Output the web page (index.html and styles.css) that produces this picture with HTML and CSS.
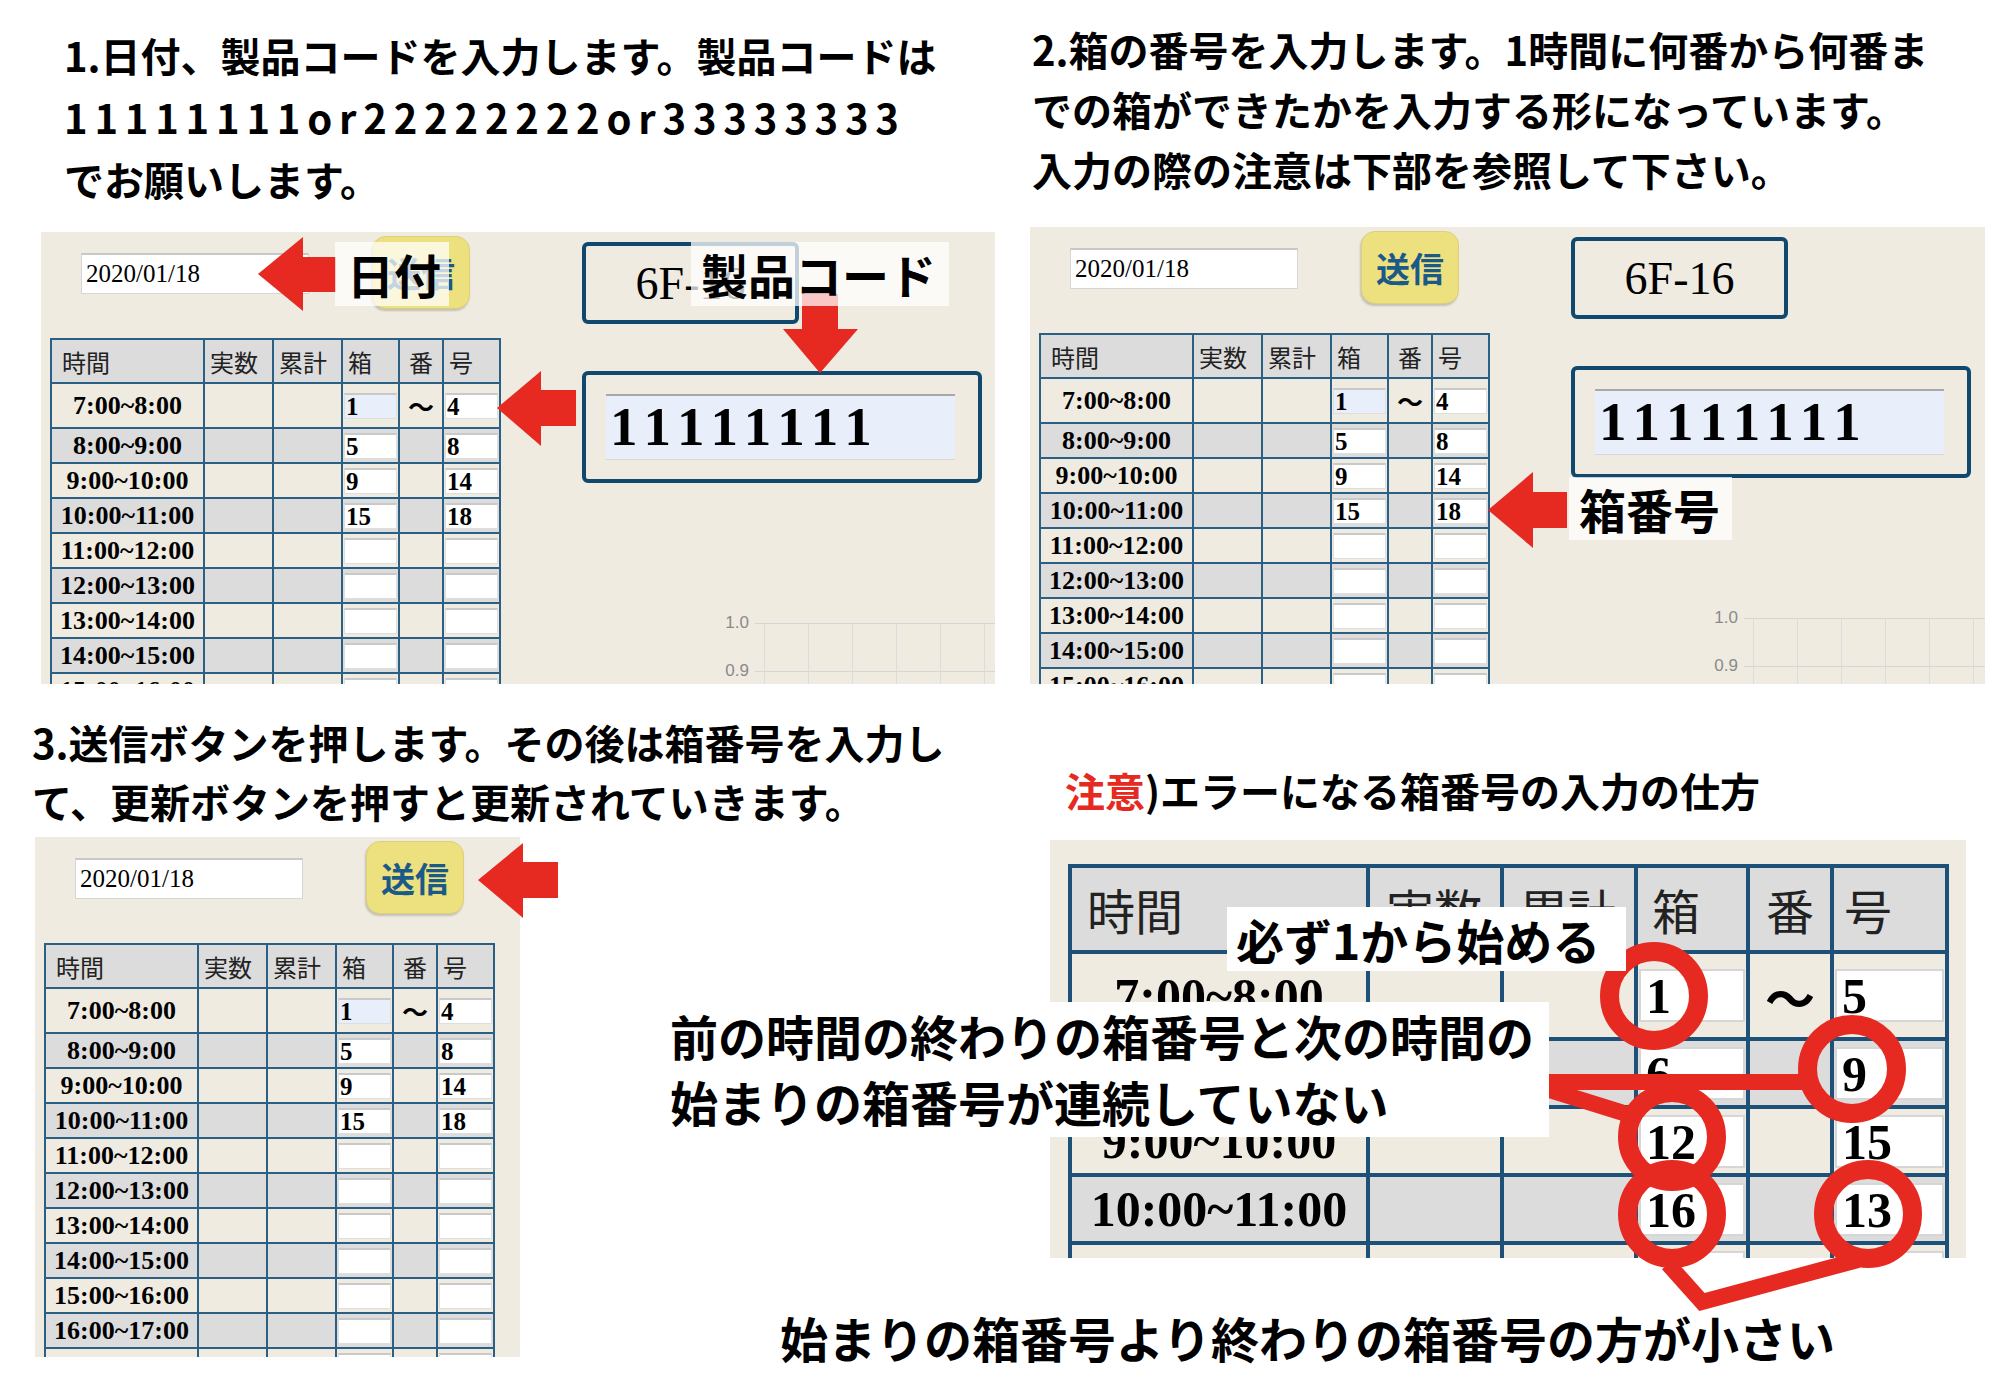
FILE: index.html
```html
<!DOCTYPE html>
<html lang="ja">
<head>
<meta charset="utf-8">
<link rel="stylesheet" href="styles.css">
</head>
<body>
<div class="page">
  <!-- top left -->
  <section class="cell">
    <p class="title t1">1.日付、製品コードを入力します。製品コードは<br><span class="digits">11111111or22222222or33333333</span><br>でお願いします。</p>
    <div class="shot s1">
      <div class="shot-left">
        <div class="ctrl"><div class="date">2020/01/18</div><div class="send">送信</div></div>
        <table class="tt">
          <colgroup><col class="c1"><col class="c2"><col class="c3"><col class="c4"><col class="c5"><col class="c6"></colgroup>
          <tr class="hd"><th class="pl">時間</th><th>実数</th><th>累計</th><th>箱</th><th class="ct">番</th><th>号</th></tr>
          <tr class="r1"><td class="tm">7:00~8:00</td><td></td><td></td><td class="in"><div class="box focus">1</div></td><td class="wave">〜</td><td class="in"><div class="box">4</div></td></tr>
          <tr class="g"><td class="tm">8:00~9:00</td><td></td><td></td><td class="in"><div class="box">5</div></td><td></td><td class="in"><div class="box">8</div></td></tr>
          <tr><td class="tm">9:00~10:00</td><td></td><td></td><td class="in"><div class="box">9</div></td><td></td><td class="in"><div class="box">14</div></td></tr>
          <tr class="g"><td class="tm">10:00~11:00</td><td></td><td></td><td class="in"><div class="box">15</div></td><td></td><td class="in"><div class="box">18</div></td></tr>
          <tr><td class="tm">11:00~12:00</td><td></td><td></td><td class="in"><div class="box"></div></td><td></td><td class="in"><div class="box"></div></td></tr>
          <tr class="g"><td class="tm">12:00~13:00</td><td></td><td></td><td class="in"><div class="box"></div></td><td></td><td class="in"><div class="box"></div></td></tr>
          <tr><td class="tm">13:00~14:00</td><td></td><td></td><td class="in"><div class="box"></div></td><td></td><td class="in"><div class="box"></div></td></tr>
          <tr class="g"><td class="tm">14:00~15:00</td><td></td><td></td><td class="in"><div class="box"></div></td><td></td><td class="in"><div class="box"></div></td></tr>
          <tr><td class="tm">15:00~16:00</td><td></td><td></td><td class="in"><div class="box"></div></td><td></td><td class="in"><div class="box"></div></td></tr>
        </table>
      </div>
      <div class="shot-right">
        <div class="line-box">6F-16</div>
        <div class="code-box"><div class="code-in">11111111</div></div>
        <div class="chart"><div class="axis"><span>1.0</span><span>0.9</span></div><div class="grid"></div></div>
      </div>
    </div>
  </section>

  <!-- top right -->
  <section class="cell">
    <p class="title t2">2.箱の番号を入力します。1時間に何番から何番ま<br>での箱ができたかを入力する形になっています。<br>入力の際の注意は下部を参照して下さい。</p>
    <div class="shot s2">
      <div class="shot-left">
        <div class="ctrl"><div class="date">2020/01/18</div><div class="send">送信</div></div>
        <table class="tt">
          <colgroup><col class="c1"><col class="c2"><col class="c3"><col class="c4"><col class="c5"><col class="c6"></colgroup>
          <tr class="hd"><th class="pl">時間</th><th>実数</th><th>累計</th><th>箱</th><th class="ct">番</th><th>号</th></tr>
          <tr class="r1"><td class="tm">7:00~8:00</td><td></td><td></td><td class="in"><div class="box focus">1</div></td><td class="wave">〜</td><td class="in"><div class="box">4</div></td></tr>
          <tr class="g"><td class="tm">8:00~9:00</td><td></td><td></td><td class="in"><div class="box">5</div></td><td></td><td class="in"><div class="box">8</div></td></tr>
          <tr><td class="tm">9:00~10:00</td><td></td><td></td><td class="in"><div class="box">9</div></td><td></td><td class="in"><div class="box">14</div></td></tr>
          <tr class="g"><td class="tm">10:00~11:00</td><td></td><td></td><td class="in"><div class="box">15</div></td><td></td><td class="in"><div class="box">18</div></td></tr>
          <tr><td class="tm">11:00~12:00</td><td></td><td></td><td class="in"><div class="box"></div></td><td></td><td class="in"><div class="box"></div></td></tr>
          <tr class="g"><td class="tm">12:00~13:00</td><td></td><td></td><td class="in"><div class="box"></div></td><td></td><td class="in"><div class="box"></div></td></tr>
          <tr><td class="tm">13:00~14:00</td><td></td><td></td><td class="in"><div class="box"></div></td><td></td><td class="in"><div class="box"></div></td></tr>
          <tr class="g"><td class="tm">14:00~15:00</td><td></td><td></td><td class="in"><div class="box"></div></td><td></td><td class="in"><div class="box"></div></td></tr>
          <tr><td class="tm">15:00~16:00</td><td></td><td></td><td class="in"><div class="box"></div></td><td></td><td class="in"><div class="box"></div></td></tr>
        </table>
      </div>
      <div class="shot-right">
        <div class="line-box">6F-16</div>
        <div class="code-box"><div class="code-in">11111111</div></div>
        <div class="chart"><div class="axis"><span>1.0</span><span>0.9</span></div><div class="grid"></div></div>
      </div>
    </div>
  </section>

  <!-- bottom left -->
  <section class="cell">
    <p class="title t3">3.送信ボタンを押します。その後は箱番号を入力し<br>て、更新ボタンを押すと更新されていきます。</p>
    <div class="shot s3">
      <div class="shot-left">
        <div class="ctrl"><div class="date">2020/01/18</div><div class="send">送信</div></div>
        <table class="tt">
          <colgroup><col class="c1"><col class="c2"><col class="c3"><col class="c4"><col class="c5"><col class="c6"></colgroup>
          <tr class="hd"><th class="pl">時間</th><th>実数</th><th>累計</th><th>箱</th><th class="ct">番</th><th>号</th></tr>
          <tr class="r1"><td class="tm">7:00~8:00</td><td></td><td></td><td class="in"><div class="box focus">1</div></td><td class="wave">〜</td><td class="in"><div class="box">4</div></td></tr>
          <tr class="g"><td class="tm">8:00~9:00</td><td></td><td></td><td class="in"><div class="box">5</div></td><td></td><td class="in"><div class="box">8</div></td></tr>
          <tr><td class="tm">9:00~10:00</td><td></td><td></td><td class="in"><div class="box">9</div></td><td></td><td class="in"><div class="box">14</div></td></tr>
          <tr class="g"><td class="tm">10:00~11:00</td><td></td><td></td><td class="in"><div class="box">15</div></td><td></td><td class="in"><div class="box">18</div></td></tr>
          <tr><td class="tm">11:00~12:00</td><td></td><td></td><td class="in"><div class="box"></div></td><td></td><td class="in"><div class="box"></div></td></tr>
          <tr class="g"><td class="tm">12:00~13:00</td><td></td><td></td><td class="in"><div class="box"></div></td><td></td><td class="in"><div class="box"></div></td></tr>
          <tr><td class="tm">13:00~14:00</td><td></td><td></td><td class="in"><div class="box"></div></td><td></td><td class="in"><div class="box"></div></td></tr>
          <tr class="g"><td class="tm">14:00~15:00</td><td></td><td></td><td class="in"><div class="box"></div></td><td></td><td class="in"><div class="box"></div></td></tr>
          <tr><td class="tm">15:00~16:00</td><td></td><td></td><td class="in"><div class="box"></div></td><td></td><td class="in"><div class="box"></div></td></tr>
          <tr class="g"><td class="tm">16:00~17:00</td><td></td><td></td><td class="in"><div class="box"></div></td><td></td><td class="in"><div class="box"></div></td></tr>
          <tr><td class="tm">17:00~18:00</td><td></td><td></td><td class="in"><div class="box"></div></td><td></td><td class="in"><div class="box"></div></td></tr>
        </table>
      </div>
    </div>
  </section>

  <!-- bottom right -->
  <section class="cell">
    <p class="title t4"><span class="red">注意</span>)エラーになる箱番号の入力の仕方</p>
    <div class="zoomshot">
      <table class="big">
        <colgroup><col class="b1"><col class="b2"><col class="b3"><col class="b4"><col class="b5"><col class="b6"></colgroup>
        <tr class="hd"><th class="p1">時間</th><th class="p2">実数</th><th class="p2">累計</th><th class="p3">箱</th><th class="ct">番</th><th class="p4">号</th></tr>
        <tr class="r1"><td class="tm">7:00~8:00</td><td></td><td></td><td class="in"><div class="box">1</div></td><td class="wave">〜</td><td class="in"><div class="box">5</div></td></tr>
        <tr class="g"><td class="tm">8:00~9:00</td><td></td><td></td><td class="in"><div class="box">6</div></td><td></td><td class="in"><div class="box">9</div></td></tr>
        <tr><td class="tm">9:00~10:00</td><td></td><td></td><td class="in"><div class="box">12</div></td><td></td><td class="in"><div class="box">15</div></td></tr>
        <tr class="g"><td class="tm">10:00~11:00</td><td></td><td></td><td class="in"><div class="box">16</div></td><td></td><td class="in"><div class="box">13</div></td></tr>
        <tr><td class="tm">11:00~12:00</td><td></td><td></td><td class="in"><div class="box"></div></td><td></td><td class="in"><div class="box"></div></td></tr>
      </table>
    </div>
  </section>

  <!-- annotations -->
  <svg class="marks" width="2012" height="1378" viewBox="0 0 2012 1378" xmlns="http://www.w3.org/2000/svg">
    <g fill="#e62a22">
      <polygon points="258,274 303,237 303,257 336,257 336,292 303,292 303,311"/>
      <polygon points="497,408 541,371 541,390 576,390 576,426 541,426 541,446"/>
      <polygon points="802,294 838,294 838,329 858,329 820,373 783,329 802,329"/>
      <polygon points="1488,510 1533,472 1533,492 1567,492 1567,528 1533,528 1533,548"/>
      <polygon points="478,880 523,843 523,862 558,862 558,898 523,898 523,918"/>
    </g>
    <g fill="none" stroke="#e62a22">
      <line x1="1540" y1="1082" x2="1812" y2="1082" stroke-width="16"/>
      <line x1="1540" y1="1087" x2="1630" y2="1115" stroke-width="16"/>
      <polyline points="1668,1264 1702,1302 1858,1260" stroke-width="16" stroke-linejoin="miter"/>
      <ellipse cx="1654" cy="996" rx="44.5" ry="44.5" stroke-width="19"/>
      <ellipse cx="1852" cy="1069" rx="44.5" ry="44.5" stroke-width="19"/>
      <ellipse cx="1672" cy="1137" rx="44.5" ry="44.5" stroke-width="19"/>
      <ellipse cx="1672" cy="1214" rx="44.5" ry="44.5" stroke-width="19"/>
      <ellipse cx="1868" cy="1214" rx="44.5" ry="44.5" stroke-width="19"/>
    </g>
  </svg>

  <div class="tag tag-date">日付</div>
  <div class="tag tag-code">製品コード</div>
  <div class="tag tag-box">箱番号</div>
  <div class="note note-1">必ず1から始める</div>
  <div class="note note-2">前の時間の終わりの箱番号と次の時間の<br>始まりの箱番号が連続していない</div>
  <div class="note note-3">始まりの箱番号より終わりの箱番号の方が小さい</div>
</div>
</body>
</html>
```

FILE: styles.css
```css
html, body {
  margin: 0;
  padding: 0;
  background: #ffffff;
}

.page {
  position: relative;
  width: 2012px;
  height: 1378px;
  overflow: hidden;
  display: grid;
  grid-template-columns: 1000px 1012px;
  grid-template-rows: 684px 694px;
  font-family: "Noto Sans CJK JP", "Noto Sans", sans-serif;
  color: #000;
}

.cell {
  display: flex;
  flex-direction: column;
  align-items: flex-start;
  min-width: 0;
}

/* ---------- titles ---------- */
.title {
  margin: 0;
  font-weight: 700;
  white-space: nowrap;
  flex: none;
}
.t1 { margin: 24px 0 0 64px; font-size: 40px; line-height: 62px; }
.t1 .digits { letter-spacing: 6.8px; }
.t2 { margin: 19px 0 0 32px; font-size: 40px; line-height: 60px; }
.t3 { margin: 29px 0 0 32px; font-size: 40px; line-height: 59px; }
.t4 { margin: 76px 0 0 65px; font-size: 40px; line-height: 60px; }
.red { color: #e62a22; }

/* ---------- app screenshot panels ---------- */
.shot {
  display: flex;
  align-items: flex-start;
  background: #efebe1;
  overflow: hidden;
  flex: none;
}
.s1 { margin: 22px 0 0 41px; width: 954px; height: 452px; }
.s2 { margin: 28px 0 0 30px; width: 955px; height: 457px; }
.s3 { margin: 6px 0 0 35px; width: 485px; height: 520px; }

.shot-left { width: 541px; flex: none; }
.s3 .shot-left { width: 485px; }

.ctrl {
  display: flex;
  align-items: flex-start;
  height: 106px;
}
.date {
  flex: none;
  margin: 21px 0 0 40px;
  width: 228px;
  height: 41px;
  box-sizing: border-box;
  background: #fff;
  border: 1px solid #d6d6d6;
  border-top: 2px solid #c8c8c8;
  padding-left: 4px;
  font-family: "Liberation Serif", serif;
  font-size: 25px;
  line-height: 38px;
}
.send {
  flex: none;
  margin: 4px 0 0 63px;
  width: 98px;
  height: 73px;
  box-sizing: border-box;
  border-radius: 14px;
  background: #ede07e;
  border: 1px solid #ddd07a;
  box-shadow: -1px 2px 2px rgba(0,0,0,0.18);
  color: #1b5a88;
  font-weight: 700;
  font-size: 34px;
  display: flex;
  align-items: center;
  justify-content: center;
}

/* small table */
.tt {
  margin-left: 9px;
  width: 449px;
  border-collapse: collapse;
  table-layout: fixed;
  font-family: "Liberation Serif", serif;
}
.tt .c1 { width: 153px; }
.tt .c2 { width: 69px; }
.tt .c3 { width: 69px; }
.tt .c4 { width: 57px; }
.tt .c5 { width: 44px; }
.tt .c6 { width: 57px; }
.tt th, .tt td {
  border: 2px solid #2b5f83;
  padding: 0;
}
.tt tr { height: 35px; }
.tt tr.hd { height: 44px; }
.tt tr.r1 { height: 45px; }
.tt th {
  background: #dcdcdc;
  font-family: "Noto Sans CJK JP", sans-serif;
  font-weight: 400;
  font-size: 24px;
  text-align: left;
  padding-left: 5px;
  color: #222;
}
.tt th.pl { padding-left: 10px; }
.tt th.ct { text-align: center; padding-left: 0; }
.tt tr.g td { background: #dcdcdc; }
.tt td.tm {
  text-align: center;
  font-weight: 700;
  font-size: 26px;
  white-space: nowrap;
}
.tt td.wave {
  text-align: center;
  font-family: "Noto Sans CJK JP", sans-serif;
  font-weight: 700;
  font-size: 26px;
}
.tt .box {
  height: 26px;
  box-sizing: border-box;
  background: #fff;
  border: 1px solid #dedede;
  border-top: 2px solid #c9c9c9;
  font-weight: 700;
  font-size: 25px;
  line-height: 23px;
  padding-left: 1px;
  margin: 0 1px;
}
.tt .box.focus { background: #e8effb; }

.shot-right {
  flex: none;
  display: flex;
  flex-direction: column;
  align-items: flex-start;
  padding-top: 10px;
}
.line-box {
  flex: none;
  width: 217px;
  height: 82px;
  box-sizing: border-box;
  border: 4px solid #10496d;
  border-radius: 6px;
  font-family: "Liberation Serif", serif;
  font-size: 46px;
  display: flex;
  align-items: center;
  justify-content: center;
}
.code-box {
  flex: none;
  margin-top: 47px;
  width: 400px;
  height: 112px;
  box-sizing: border-box;
  border: 4px solid #10496d;
  border-radius: 6px;
}
.code-in {
  margin: 19px 0 0 20px;
  width: 349px;
  height: 66px;
  box-sizing: border-box;
  background: #e8effa;
  border-top: 2px solid #a8a8a8;
  border-bottom: 1px solid #d8d8d8;
  padding-left: 4px;
  font-family: "Liberation Serif", serif;
  font-weight: 700;
  font-size: 55px;
  line-height: 62px;
  letter-spacing: 9px;
  white-space: nowrap;
  overflow: hidden;
}
.chart {
  flex: none;
  margin: 130px 0 0 142px;
  display: flex;
  width: 300px;
}
.axis {
  width: 31px;
  flex: none;
}
.axis span {
  display: block;
  height: 48px;
  line-height: 20px;
  text-align: right;
  padding-right: 6px;
  font-family: "Liberation Sans", sans-serif;
  font-size: 17px;
  color: #8a8a8a;
}
.grid {
  margin-top: 10px;
  flex: 1;
  height: 120px;
  background:
    repeating-linear-gradient(to bottom, #d6d6d6 0 1px, transparent 1px 48px),
    repeating-linear-gradient(to right, #dcdcdc 0 1px, transparent 1px 44px) 9px 0 / 100% 100% no-repeat;
}

/* big zoomed table */
.zoomshot {
  margin: 20px 0 0 50px;
  width: 916px;
  height: 418px;
  background: #efebe1;
  overflow: hidden;
  padding: 24px 0 0 18px;
  box-sizing: border-box;
  flex: none;
}
.big {
  width: 877px;
  border-collapse: collapse;
  table-layout: fixed;
  font-family: "Liberation Serif", serif;
}
.big .b1 { width: 298px; }
.big .b2 { width: 134px; }
.big .b3 { width: 134px; }
.big .b4 { width: 112px; }
.big .b5 { width: 84px; }
.big .b6 { width: 115px; }
.big th, .big td {
  border: 4px solid #1d5177;
  padding: 0;
}
.big tr { height: 68px; }
.big tr.hd { height: 86px; }
.big tr.r1 { height: 87px; }
.big th {
  background: #dcdcdc;
  font-family: "Noto Sans CJK JP", sans-serif;
  font-weight: 400;
  font-size: 48px;
  text-align: left;
  color: #222;
}
.big th.p1 { padding-left: 15px; }
.big th.p2 { padding-left: 16px; }
.big th.p3 { padding-left: 14px; }
.big th.p4 { padding-left: 10px; }
.big th.ct { text-align: center; }
.big tr.g td { background: #dcdcdc; }
.big td.tm {
  text-align: center;
  font-weight: 700;
  font-size: 50px;
  white-space: nowrap;
}
.big td.wave {
  text-align: center;
  font-family: "Noto Sans CJK JP", sans-serif;
  font-weight: 700;
  font-size: 50px;
}
.big .box {
  height: 53px;
  box-sizing: border-box;
  background: #fff;
  border: 2px solid #d6d6d6;
  font-weight: 700;
  font-size: 50px;
  line-height: 50px;
  padding-left: 5px;
  margin: 0 1px;
}

/* ---------- annotations ---------- */
.marks {
  position: absolute;
  left: 0;
  top: 0;
  pointer-events: none;
}
.tag {
  position: absolute;
  box-sizing: border-box;
  background: rgba(255,255,255,0.74);
  font-weight: 700;
  font-size: 47px;
  line-height: 64px;
  height: 64px;
  white-space: nowrap;
}
.tag-date { left: 335px; top: 242px; width: 114px; padding-left: 12px; }
.tag-code { left: 691px; top: 242px; width: 258px; padding-left: 10px; }
.tag-box { left: 1569px; top: 477px; width: 163px; height: 63px; line-height: 63px; padding-left: 10px; }

.note {
  position: absolute;
  box-sizing: border-box;
  font-weight: 700;
  font-size: 48px;
  white-space: nowrap;
}
.note-1 {
  left: 1227px; top: 907px; width: 399px; height: 64px;
  background: #fff; line-height: 64px; padding-left: 9px;
}
.note-2 {
  left: 655px; top: 1002px; width: 894px; height: 135px;
  background: #fff; line-height: 66px; padding-left: 15px;
}
.note-3 {
  left: 780px; top: 1304px; line-height: 66px;
}
```
